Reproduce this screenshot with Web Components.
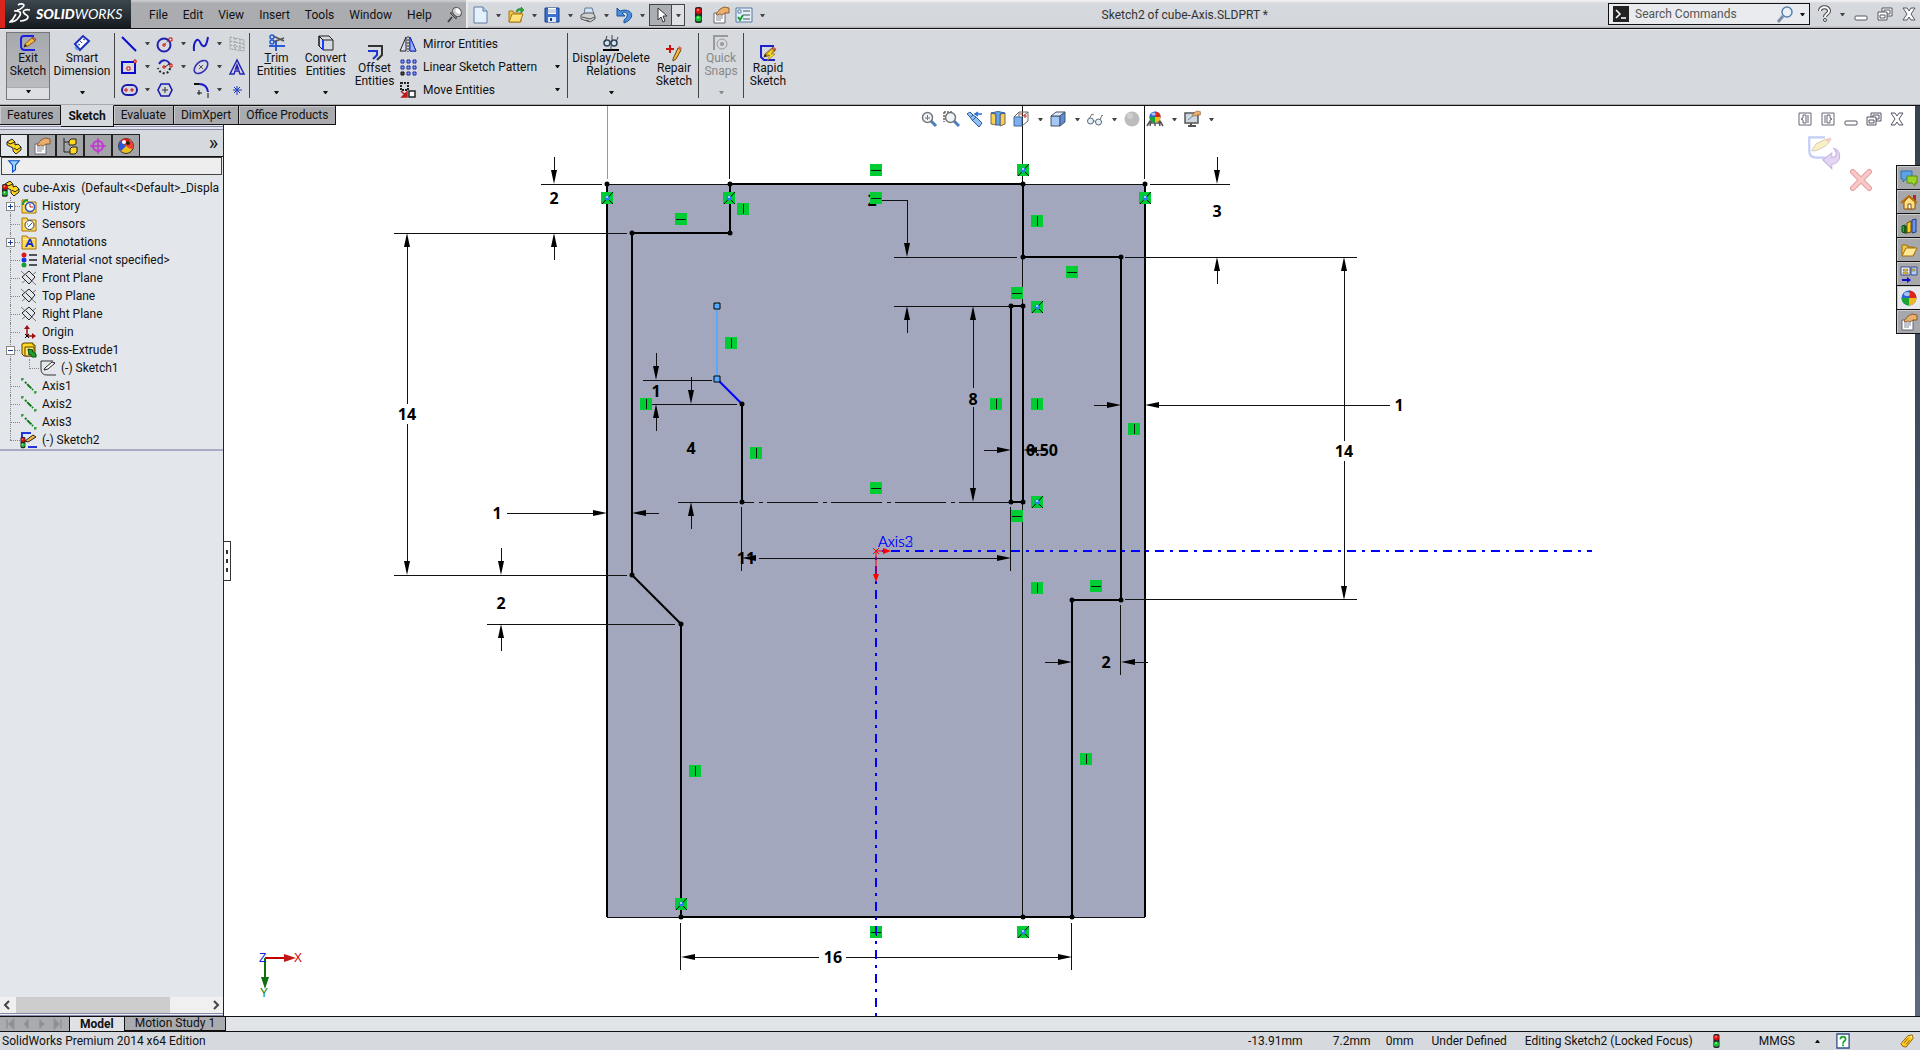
<!DOCTYPE html>
<html lang="en">
<head>
<meta charset="utf-8">
<title>Sketch2 of cube-Axis.SLDPRT *</title>
<style>
  html, body {
    height: 100%;
    margin: 0;
  }

  body {
    font-family: Roboto, "Open Sans", sans-serif;
    font-size: 12px;
    line-height: 16px;
    color: #111;
    overflow: hidden;
  }
</style>
</head>
<body>
<cad-app></cad-app>

<script>
const PENCIL = `<path d="M5 9 12 3l3 3-7 5-4 1z" fill="#f5b83c" stroke="#5b3a10" stroke-width=".7"/><path d="m12 3 1-1 3 2-1 2z" fill="#e06a5c" stroke="#703020" stroke-width=".5"/><path d="m4 12 1-3 2 2z" fill="#222"/>`;
const HAND = `<path d="M3 7 7 2l4-2 5 1v5h-4L9 8 7 7 4 8z" fill="#e8b06c" stroke="#7a4a1a" stroke-width=".8"/>`;
const LAMP = `<rect x="5" y="0" width="7" height="16" rx="2" fill="#282828"/><circle cx="8.500" cy="4" r="3" fill="#e01010"/><circle cx="8" cy="3" r="1" fill="#ff9a9a"/><circle cx="8.500" cy="11.500" r="3" fill="#12c030"/><circle cx="8" cy="10.500" r="1" fill="#a6ffb0"/>`;
const BALL = `<circle cx="8" cy="8" r="7.500" fill="#2a66d8"/><path d="M8 8V.5a7.500 7.500 0 0 1 7.500 7.500z" fill="#e02418"/><path d="M8 8h7.500A7.500 7.500 0 0 1 8 15.500z" fill="#f0b818"/><path d="M8 8v7.500A7.500 7.500 0 0 1 .5 8z" fill="#1ba436"/><ellipse cx="6" cy="4" rx="3" ry="2" fill="#fff" opacity=".6"/>`;
const FOLDER = `<path d="M1 15V2h5l1 2h8v11z" fill="#ffd95c" stroke="#a87408"/><path d="M2 5h12v1H2z" fill="#fff0b0"/>`;
const PLANE = `<path d="m0 1 15 14M15 2 1 13" stroke="#777"/><path d="m8 1 6 6-6 7-7-7z" fill="#e3e6eb" stroke="#222"/><path d="m5 5 6 6" stroke="#222"/>`;
const AXIS = `<path d="M0 1h3M1 0v3M13 14h3M14 13v3" stroke="#0a8a12"/><path d="m4 4 8 8" stroke="#0a7a12" stroke-width="2" stroke-dasharray="2 1 6 1"/>`;
const PART = `<path d="m1 4 5-3 3 3v3l3-1 3 3v3l-5 4-3-3v-3L1 7z" fill="#ffd820" stroke="#222"/><path d="m1 4 3 2 5-2M8 10l3 2 4-3" fill="none" stroke="#222"/>`;
const GLASS = `<path d="m10 10 5 5" stroke="#4b80c0" stroke-width="3"/><circle cx="6.500" cy="6.500" r="5" fill="#eef4fa" stroke="#777" stroke-width="1.500"/>`;

const ICONS = {
  newdoc: `<path d="M2 0h9l4 4v12H2z" fill="#e4f0fc" stroke="#5a7c9f"/><path d="M11 0v4h4" fill="#b9d2ec" stroke="#5a7c9f"/>`,
  open: `<path d="M1 15V4h4l1 2h7v9z" fill="#f4c64e" stroke="#a87812"/><path d="m1 15 3-8h11l-3 8z" fill="#ffe27c" stroke="#a87812"/><path d="M8 4c1-2 3-3 5-2V0l3 3-3 3V4c-2-1-3 0-4 1z" fill="#2aa835" stroke="#167a20" stroke-width=".6"/>`,
  save: `<path d="M1 1h14v14H1z" fill="#3b6fd0" stroke="#173e86"/><path d="M4 1h8v6H4z" fill="#fff"/><path d="M4 3h8M4 5h8" stroke="#9ab"/><path d="M4 10h8v5H4z" fill="#dce6f4"/><path d="M6 11h2v3H6z" fill="#173e86"/>`,
  print: `<path d="m4 7 1-6h7l2 6z" fill="#cfe2f8" stroke="#66788c"/><path d="m1 8 4-2h8l2 3v3l-5 3-9-3z" fill="#d0d0d0" stroke="#555"/><path d="m2 10 8 2 5-2M6 13l3 1" stroke="#555" fill="none"/>`,
  undo: `<path d="M1 1v8h8L6 6c5-3 8 3 2 7v3c13-5 8-16-4-12z" fill="#4c90e0" stroke="#1b4f9a"/>`,
  cursor: `<path d="M5 1v12l3-3 2 5 2-1-2-5h4z" fill="#fff" stroke="#333"/>`,
  lamp: LAMP,
  options: `<path d="M1 6h11v10H1z" fill="#fff" stroke="#667"/><path d="M3 9h7M3 11h7M3 13h5" stroke="#889"/>${HAND}`,
  checklist: `<path d="M0 1h16v14H0z" fill="#e4effa" stroke="#5878a0"/><path d="M2 3h3v3H2z" fill="#fff" stroke="#5878a0"/><path d="M7 4h7M7 8h7M7 12h7" stroke="#456"/><path d="m2 10 2 3 3-5" stroke="#1a9b30" stroke-width="2" fill="none"/>`,
  pin: `<path d="m5 10-4 5" stroke="#444" stroke-width="2"/><path d="M3 6c3 0 5-2 6-5l5 7c-3 0-5 2-5 4z" fill="#888" stroke="#444"/><ellipse cx="10" cy="5" rx="4" ry="5" fill="#ccc" stroke="#555" transform="rotate(-40 10 5)"/><ellipse cx="11" cy="4" rx="2" ry="3" fill="#fff" transform="rotate(-40 11 4)"/>`,
  exit: `<path d="M14 1H4Q1 1 1 4v7q0 4 4 4h10" fill="none" stroke="#1c22e0" stroke-width="2"/>${PENCIL}`,
  smart: `<path d="m1 9 8-8 6 5-9 9z" fill="#fff" stroke="#1a30b8" stroke-width="2"/><path d="m4 9 2 1M6 6l2 2M9 4l2 1" stroke="#1a30b8"/><path d="m1 12 3 3" stroke="#58a0f0" stroke-width="2"/>`,
  line: `<path d="m1 1 14 14" stroke="#0a0ad0" stroke-width="2"/>`,
  circle: `<circle cx="7" cy="9" r="6.500" fill="none" stroke="#2222b0" stroke-width="2"/><path d="m7 9 6-6" stroke="#222" stroke-dasharray="1 1"/><path d="M6 8h2v2H6zM12 2h3v3h-3z" fill="#fff" stroke="#c00"/>`,
  spline: `<path d="M1 15C0 5 5 1 7 6s6 8 8-5" fill="none" stroke="#1818c0" stroke-width="2"/>`,
  plane3: `<path d="m1 1 14 3v11L1 13zM6 2v12M11 3v12M1 5l14 3M1 9l14 3" fill="none" stroke="#999" stroke-dasharray="2 1"/>`,
  rect: `<path d="M1 3h13v11H1z" fill="none" stroke="#0a0ad0" stroke-width="2"/><path d="M6 8h3v3H6zM13 1h2v3h-2z" fill="#fff" stroke="#c00"/>`,
  arc: `<path d="M2 5c3-5 9-5 11 1" fill="none" stroke="#2222b0" stroke-width="2"/><path d="M13 9c-1 7-10 7-12 0" fill="none" stroke="#222" stroke-width="2" stroke-dasharray="2 2"/><path d="m8 8 4-3" stroke="#222"/><path d="M6 7h2v2H6zM13 5h2v3h-2z" fill="#fff" stroke="#c00"/>`,
  ellipse: `<ellipse cx="8" cy="8" rx="8" ry="5" fill="none" stroke="#3333b0" stroke-width="1.600" transform="rotate(-42 8 8)"/><path d="m6 6 4 4M10 6l-4 4" stroke="#555"/>`,
  textA: `<path d="M8 1 1 15h4l1-3h4l1 3h4zM8 6l1.500 4h-3z" fill="#dde" stroke="#2424b0" stroke-width="1.500" fill-rule="evenodd"/>`,
  slot: `<rect x="1" y="3" width="15" height="10" rx="5" fill="none" stroke="#1a1ab0" stroke-width="2"/><path d="M4 7h2v2H4zM10 7h2v2h-2z" fill="#fff" stroke="#c00"/>`,
  polygon: `<path d="M4 2h8l3 6-3 6H4L1 8z" fill="none" stroke="#1a1ab0" stroke-width="1.600"/><path d="M8 5v6M5 8h6" stroke="#333"/>`,
  fillet: `<path d="M1 2h5" stroke="#111" stroke-width="2"/><path d="M6 2q8 0 9 8" fill="none" stroke="#1a1ad0" stroke-width="2"/><path d="M15 11v5M6 8v5M4 11h5" stroke="#111"/>`,
  point: `<path d="M8 4v9M4 8h9M5 5l6 6M11 5l-6 6" stroke="#1a3ac0"/>`,
  trim: `<path d="M0 11h16M7 6v10" stroke="#2a5cd0" stroke-width="2"/><path d="m4 1 11 5M4 7l11-4" stroke="#555" stroke-width="1.600"/><circle cx="3" cy="2" r="2" fill="none" stroke="#2a5cd0" stroke-width="1.500"/><circle cx="3" cy="7" r="2" fill="none" stroke="#2a5cd0" stroke-width="1.500"/>`,
  convert: `<path d="M1 1h10l4 4v10H5l-4-4zM1 1l4 4h10M5 5v10" fill="none" stroke="#222"/><path d="M1 1v10l4 4V5z" fill="none" stroke="#111"/><path d="M5 5v10" stroke="#1c3cff" stroke-width="2"/>`,
  offset: `<path d="M1 1h14v9l-5 5" fill="none" stroke="#333" stroke-width="2"/><path d="M1 6h9v4l-4 4" fill="none" stroke="#2034d8" stroke-width="2"/>`,
  mirror: `<path d="M6 1v14H0zM10 1v14h6z" fill="#dde" stroke="#222"/><path d="M10 1v14h6z" fill="#9bb4ff" stroke="#1a2ac0"/><path d="M8 0v16" stroke="#222" stroke-dasharray="2 1"/>`,
  pattern: `<path d="M1 1h3v3H1zM7 1h3v3H7zM13 1h3v3h-3zM1 7h3v3H1zM7 7h3v3H7zM13 7h3v3h-3zM7 13h3v3H7zM13 13h3v3h-3z" fill="#8ca4ff" stroke="#1a2aa0"/><path d="M1 13h3v3H1z" fill="#555" stroke="#111"/>`,
  move: `<path d="M1 1h7v7H1z" fill="none" stroke="#222" stroke-width="2" stroke-dasharray="2 1"/><path d="M9 9h6v6H9z" fill="#fff" stroke="#222" stroke-width="1.500"/><path d="m1 9 6 6M7 10v5H2z" stroke="#c01818" fill="#c01818" stroke-width="1.500"/>`,
  relations: `<path d="M0 15h16" stroke="#000" stroke-width="2"/><circle cx="4" cy="8" r="3" fill="#cfe4ee" stroke="#345" stroke-width="1.500"/><circle cx="11" cy="8" r="3" fill="#cfe4ee" stroke="#345" stroke-width="1.500"/><path d="M7 8h1M2 7l2-6M9 7V0M13 7l2-5M8 11v4" stroke="#345" fill="none"/>`,
  repair: `<path d="M0 4h8M4 0v8" stroke="#d01010" stroke-width="2"/><path d="m7 14 5-11 3 2-5 9-3 2z" fill="#f5b83c" stroke="#6b4510"/><path d="m12 3 1-2 3 2-1 2z" fill="#d66"/>`,
  snaps: `<path d="M1 15V1h14" fill="none" stroke="#999" stroke-width="2"/><circle cx="9" cy="9" r="5" fill="none" stroke="#999"/><circle cx="9" cy="9" r="2" fill="#999"/>`,
  rapid: `<path d="M14 1H1v11l3 3h11" fill="none" stroke="#1c22c8" stroke-width="2"/>${PENCIL}<path d="m11 5-5 5h4l-3 6 8-7h-4l3-4z" fill="#ffe020" stroke="#8a6a00" stroke-width=".6"/>`,
  prompt: `<path d="M0 0h16v16H0z" fill="#222"/><path d="m3 4 4 4-4 4M8 12h5" stroke="#fff" stroke-width="1.500" fill="none"/>`,
  search: `<path d="M5 10 0 16" stroke="#7c8ea8" stroke-width="3"/><circle cx="9" cy="6" r="5" fill="#e9f2fb" stroke="#5c80ac" stroke-width="1.500"/>`,
  help: `<path d="M4 5c0-5 9-5 9 0 0 3-4 3-4 6" fill="none" stroke="#444" stroke-width="4"/><path d="M4 5c0-5 9-5 9 0 0 3-4 3-4 6" fill="none" stroke="#fff" stroke-width="2"/><circle cx="9" cy="14" r="1.500" fill="#fff" stroke="#444"/>`,
  min: `<rect x="2" y="10" width="12" height="4" rx="1" fill="#fff" stroke="#556"/>`,
  restore: `<path d="M5 2h10v8H5z" fill="#fff" stroke="#556"/><path d="M7 4h6v4H7z" fill="none" stroke="#556"/><path d="M1 6h9v8H1z" fill="#fff" stroke="#556"/><path d="M3 9h5v3H3z" fill="none" stroke="#556"/>`,
  close: `<path d="M2 2h4l2 3 2-3h4l-4 6 4 6h-4l-2-3-2 3H2l4-6z" fill="#fff" stroke="#556"/>`,
  paneL: `<path d="M2 2h12v12H2z" fill="#fff" stroke="#667"/><path d="M9 4v8H6V9L4 8l2-1V4zM11 4v8" fill="none" stroke="#667"/>`,
  paneR: `<path d="M2 2h12v12H2z" fill="#fff" stroke="#667"/><path d="M7 4v8h3V9l2-1-2-1V4zM5 4v8" fill="none" stroke="#667"/>`,
  part: PART,
  partlamp: `<g transform="translate(2 0)">${PART}</g><g transform="translate(-4 4) scale(.8)">${LAMP}</g>`,
  config: `<path d="M2 0v14h6M2 4h6" fill="none" stroke="#222"/><g fill="#ffd820" stroke="#222"><path d="m7 3 2-2h5v5l-2 1H7zM8 11l2-2h5v5l-2 2H8z"/></g>`,
  dimx: `<circle cx="8" cy="8" r="5" fill="none" stroke="#c038d0" stroke-width="2"/><path d="M8 0v16M0 8h16" stroke="#c038d0" stroke-width="1.500"/>`,
  beach: `<circle cx="8" cy="8" r="7.500" fill="#e8c020" stroke="#333"/><path d="M8 8 2 3a7.500 7.500 0 0 1 10-1z" fill="#e02020"/><path d="M8 8 2 3a7.500 7.500 0 0 0 1 10z" fill="#2b55d8"/><path d="M8 8c2-3 4-4 4-6 3 2 4 6 3 9-3 0-5-1-7-3z" fill="#f04030"/><circle cx="10" cy="5" r="2" fill="#222"/><circle cx="6" cy="4" r="2" fill="#fff"/>`,
  filter: `<path d="M1 1h14l-5 6v6l-4 3V7z" fill="#9cd0ff" stroke="#0a50c8" stroke-width="1.500"/>`,
  history: `${FOLDER}<circle cx="9" cy="9" r="4.500" fill="#fff" stroke="#2454c0" stroke-width="1.500"/><path d="M9 6v3h3" stroke="#c01818" fill="none"/><path d="M2 7c0-3 2-5 5-5" fill="none" stroke="#1a9b30" stroke-width="2"/>`,
  sensor: `${FOLDER}<circle cx="8.500" cy="9" r="4.500" fill="#fff" stroke="#345"/><path d="m7 11 4-4M6 8h1" stroke="#2454c0"/>`,
  notes: `${FOLDER}<path d="m4 13 4-8h2l3 8h-2l-1-2H7l-1 2zM8 9h2l-1-2z" fill="#1633c8" fill-rule="evenodd"/>`,
  material: `<circle cx="3" cy="3" r="2.500" fill="#e01818"/><circle cx="3" cy="8" r="2.500" fill="#1c38e0"/><circle cx="3" cy="13" r="2.500" fill="#18a030"/><path d="M8 3h8M8 8h8M8 13h8" stroke="#222" stroke-width="1.500"/>`,
  plane: PLANE,
  origin: `<path d="M6 3v9h7" fill="none" stroke="#a01010" stroke-width="1.500"/><path d="m3 5 3-4 3 4zM11 9l4 3-4 3z" fill="#a01010"/><path d="m4 10 4 4M8 10l-4 4" stroke="#000"/>`,
  extrude: `<path d="M1 12V2l2-1h9v2h2v11H3z" fill="#ffd820" stroke="#5c4200"/><path d="M4 5h9v9H4z" fill="#ffe878" stroke="#5c4200"/><path d="m7 7 5 1-1 1 4 3v3h-4l-2-3-1 1z" fill="#1ea030" stroke="#0a4a12"/>`,
  sketch: `<path d="M13 1H1v8q0 6 6 6h9" fill="none" stroke="#333"/><path d="m5 8 7-6 3 1-7 6-4 1z" fill="#fff" stroke="#222"/>`,
  axis: AXIS,
  sketch2: `<path d="M10 1H1v6M7 15h9" fill="none" stroke="#2036d8" stroke-width="2"/><path d="m4 9 8-6 3 2-8 5z" fill="#f5b83c" stroke="#222"/><g transform="translate(-4 5) scale(.7)">${LAMP}</g>`,
  zoomfit: `${GLASS}<path d="M4 7h5M6.500 4v5" stroke="#777"/>`,
  zoomarea: `${GLASS}<path d="M0 1h9M0 1v10" stroke="#666" stroke-dasharray="2 1" stroke-width="1.500"/>`,
  prevview: `<path d="m0 3 3-2 3 3 3 2 6 6-3 4-7-7-2-3z" fill="#8fc0f4" stroke="#305c98"/><path d="m3 7 3-3M6 9l3-3" stroke="#305c98"/><path d="M9 3h6M11 1 8 3l3 2" stroke="#2a6cd8" fill="none" stroke-width="1.500"/>`,
  section: `<path d="m1 2 5 1v11l-5-1zM10 3l5-1v11l-5 2z" fill="#f8d050" stroke="#765"/><path d="M1 2q7-3 14 0l-5 1v11H6V3z" fill="#6aa4ee" stroke="#3a629c"/>`,
  orient: `<path d="M1 6h8v9H1z" fill="#7eb0f0" stroke="#3a66a0"/><path d="m1 6 5-5h9v9l-6 5M9 6l6-5M6 1v5" fill="none" stroke="#666"/><path d="M11 5h3M12 3v4M7 3h3" stroke="#c33"/>`,
  cube: `<path d="M1 5h9v10H1z" fill="#a5c8f8" stroke="#456"/><path d="m1 5 5-4h9l-5 4z" fill="#dceafc" stroke="#456"/><path d="m10 5 5-4v10l-5 4z" fill="#5f8ed8" stroke="#456"/>`,
  glasses: `<circle cx="3.500" cy="10" r="3" fill="#e6f2f8" stroke="#567"/><circle cx="11.500" cy="11" r="3" fill="#e6f2f8" stroke="#567"/><path d="M6 10h2M2 8l3-5 2 1M13 9l2-5 1 1" fill="none" stroke="#777"/>`,
  sphere: `<circle cx="8" cy="8" r="7.500" fill="#bcbcbc"/><circle cx="6" cy="5" r="3" fill="#cfcfcf"/>`,
  scene: `<path d="m0 15 3-5h10l3 5M1 12h14M4 10l-1 5M8 10v5M12 10l1 5" fill="none" stroke="#555" stroke-width="1.500"/><g transform="translate(2) scale(.75)">${BALL}</g>`,
  screen: `<path d="M1 2h13v10H1z" fill="#cdd8e2" stroke="#555" stroke-width="1.500"/><path d="M4 15h8M7 12v3" stroke="#555" stroke-width="2"/><path d="m4 9 7-6" stroke="#7788a0"/><g transform="translate(6) scale(.65)">${HAND}</g>`,
  forum: `<path d="M0 1h11v8H5l-3 3V9H0z" fill="#5ba4e8" stroke="#2f6fb4"/><path d="M6 6h10v7h-2v3l-3-3H6z" fill="#9bd428" stroke="#5a8a10"/>`,
  home: `<path d="M12 1h3v6h-3z" fill="#b02828"/><path d="M3 8v7h11V8L8 3z" fill="#ffe080" stroke="#86500c"/><path d="m0 9 8-7 8 7" fill="none" stroke="#b8700c" stroke-width="2"/><path d="M7 10h3v5H7z" fill="#fff" stroke="#86500c"/>`,
  library: `<path d="m1 8 3-1v8l-3-1zM4 8l2 1v6H4z" fill="#28a838" stroke="#0b4a14"/><path d="m6 5 4-2v11l-4 1z" fill="#ffcc28" stroke="#6a4a00"/><path d="m11 2 4-1v13l-4 1z" fill="#6c96e8" stroke="#203c80"/>`,
  folder: `<path d="M1 13V3h5l1 2h6v8z" fill="#f4c64e" stroke="#a06c08"/><path d="m1 14 4-8h11l-4 8z" fill="#ffe896" stroke="#a06c08"/>`,
  palette: `<path d="M0 1h9v8H0z" fill="#fff" stroke="#3a4c90"/><path d="M10 1h6v8h-6z" fill="#b9cdf0" stroke="#3a4c90"/><path d="M2 3h5v2H2zM2 6h5v2H2zM11 3h3v2h-3z" fill="#f0c830" stroke="#555" stroke-width=".5"/><path d="M1 13h5v-2l4 3-4 3v-2H1z" fill="#1010c8"/>`,
  ball: BALL,
  quest: `<path d="M1 0h14v16H1z" fill="#fff" stroke="#33508c" stroke-width="1.500"/><path d="M5 6c0-4 6-4 6 0 0 2-3 2-3 5M8 12v2" fill="none" stroke="#16a028" stroke-width="2"/>`,
  tag: `<path d="m1 11 8-9 5-1 1 4-8 10-4-1z" fill="#ffc828" stroke="#8a5a00"/><path d="m5 10 4-5M7 12l4-5" stroke="#8a5a00"/><circle cx="13" cy="3" r="1" fill="#fff"/>`,
  first: `<path d="M4 2v12M13 2 7 8l6 6z" fill="#8e9094" stroke="#8e9094" stroke-width="2"/>`,
  prev: `<path d="m11 2-6 6 6 6z" fill="#8e9094" stroke="#8e9094"/>`,
  next: `<path d="m5 2 6 6-6 6z" fill="#8e9094" stroke="#8e9094"/>`,
  last: `<path d="M12 2v12M3 2l6 6-6 6z" fill="#8e9094" stroke="#8e9094" stroke-width="2"/>`,
  accept: `<path d="M8 1H1v6q0 3 3 3h4" fill="none" stroke="#c3cdf8" stroke-width="1"/><path d="m2 7 2-3 4-2 2 1-2 2-4 2z" fill="#fbf0c4" stroke="#ccc4b4" stroke-width=".4"/><path d="m8 2 2-1 1 1-1 1z" fill="#f6cfcb"/><path d="M12 6c4 1 3 7-1 7v2l-4-4 4-3v2c3 0 2-3 1-4z" fill="#e3d6f2" stroke="#c9b4e4" stroke-width=".5"/>`,
  reject: `<path d="m2 2 12 12M14 2 2 14" stroke="#e0a0a0" stroke-width="4" stroke-linecap="round"/><path d="m2 2 12 12M14 2 2 14" stroke="#fac8c8" stroke-width="2.600" stroke-linecap="round"/>`
};

class CadElement extends HTMLElement {
  constructor() {
    super();
    const template = document.createElement("template");
    template.innerHTML = this.markup();
    this._shadowRoot = this.attachShadow({ mode: "open" });
    this._shadowRoot.appendChild(template.content.cloneNode(true));
  }
}

class CadIcon extends HTMLElement {
  connectedCallback() {
    if (this.shadowRoot) return;
    this.attachShadow({ mode: "open" }).innerHTML = `
<style>
  :host { display: inline-block; flex: none; width: var(--icon-size, 16px); height: var(--icon-size, 16px); white-space: normal; }
  svg { display: block; width: 100%; height: 100%; overflow: visible; }
</style>
<svg viewBox="0 0 16 16" fill="none" aria-hidden="true">${ICONS[this.getAttribute("name")]}</svg>`;
  }
}
customElements.define("cad-icon", CadIcon);

class CadCaret extends CadElement {
  markup() {
    return `
<style>
  :host { display: inline-block; flex: none; width: 5px; height: 3px; white-space: normal; }
  svg { display: block; }
</style>
<svg width="5" height="3" viewBox="0 0 5 3"><path d="M0 0h5L3 3H2z" fill="currentColor"/></svg>`;
  }
}
customElements.define("cad-caret", CadCaret);

// Small flat button: an icon, and with [menu] a drop-down arrow after it
class IconButton extends HTMLElement {
  connectedCallback() {
    if (this.shadowRoot) return;
    this.attachShadow({ mode: "open" }).innerHTML = `
<style>
  :host { display: inline-flex; flex: none; }
  :host([pressed]) { margin: 0 -2px 0 -3px; }
  button {
    display: flex;
    align-items: center;
    gap: var(--caret-gap, 8px);
    padding: var(--button-padding, 0);
    border: 0;
    background: none;
    color: #444;
  }
  :host([pressed]) button {
    gap: 7px;
    height: 22px;
    padding: 0 3px;
    border: 1px solid #444;
    background: linear-gradient(90deg, #abaeb3 21px, #444 21px, #444 22px, #dfe1e5 22px);
  }
</style>
<button aria-label="${this.getAttribute("label") || this.getAttribute("icon")}"><cad-icon name="${this.getAttribute("icon")}"></cad-icon>${this.hasAttribute("menu") ? "<cad-caret></cad-caret>" : ""}</button>`;
  }
}
customElements.define("icon-button", IconButton);

class TitleBar extends CadElement {
  markup() {
    return `
<style>
  :host {
    display: flex;
    height: 28px;
    border-bottom: 1px solid #111;
    background: linear-gradient(#f0f0f2 1px, #d6d9de 3px, #d3d6db 26px, #a4a6aa 28px);
  }
  .logo {
    display: flex;
    align-items: center;
    gap: 5px;
    width: 122px;
    border-left: 5px solid #d9261c;
    padding-left: 4px;
    background: linear-gradient(#3d474e, #151a1f);
    color: #fff;
    font: italic 14px/28px Lato, sans-serif;
  }
  .logo b { font-weight: 900; }
  .menus {
    display: flex;
    align-items: center;
    gap: 15px;
    padding: 2px 3px 0 18px;
    background: linear-gradient(#c9cacd 1px, #abadb1 3px, #a9abaf 26px);
    border-right: 2px solid #e8e9eb;
  }
  .menus button { border: 0; padding: 0; background: none; font: inherit; color: #111; }
  .quick { display: flex; align-items: center; gap: 7px; padding: 2px 4px 0; margin-right: auto; }
  .title { align-self: center; padding: 2px 340px 0 0; color: #333; }
  .search {
    display: flex;
    align-items: center;
    gap: 6px;
    width: 192px;
    height: 20px;
    margin: 3px 6px 0 0;
    padding: 0 4px;
    border: 1px solid #111;
    background: #e9ebee;
  }
  input { flex: 1; min-width: 0; border: 0; padding: 0; background: none; font: inherit; }
  input::placeholder { color: #555; opacity: 1; }
  .window { display: flex; align-items: center; gap: 8px; padding-right: 3px; }
</style>
<div class="logo">
  <svg width="22" height="22" viewBox="0 0 22 22" fill="none" stroke="#fff" stroke-width="1.700"><path d="M9 2c3-2 8-1 5 2-2 2-4 3-6 3M5 8c6-1 8 2 5 6-2 3-6 5-9 5l3-3 3-5M21 7c-5-1-8 1-6 3 1 2 4 2 4 4s-3 4-8 4"/></svg>
  <span><b>SOLID</b>WORKS</span>
</div>
<nav class="menus">
  <button>File</button><button>Edit</button><button>View</button><button>Insert</button><button>Tools</button><button>Window</button><button>Help</button>
  <cad-icon name="pin"></cad-icon>
</nav>
<div class="quick">
  <icon-button icon="newdoc" label="New" menu></icon-button>
  <icon-button icon="open" label="Open" menu></icon-button>
  <icon-button icon="save" label="Save" menu></icon-button>
  <icon-button icon="print" label="Print" menu></icon-button>
  <icon-button icon="undo" label="Undo" menu></icon-button>
  <icon-button icon="cursor" label="Select" menu pressed></icon-button>
  <icon-button icon="lamp" label="Rebuild"></icon-button>
  <icon-button icon="options" label="File properties"></icon-button>
  <icon-button icon="checklist" label="Options" menu></icon-button>
</div>
<div class="title">Sketch2 of cube-Axis.SLDPRT *</div>
<label class="search">
  <cad-icon name="prompt"></cad-icon>
  <input type="text" placeholder="Search Commands" aria-label="Search Commands">
  <cad-icon name="search"></cad-icon><cad-caret></cad-caret>
</label>
<div class="window">
  <icon-button icon="help" label="Help" menu></icon-button>
  <icon-button icon="min" label="Minimize"></icon-button>
  <icon-button icon="restore" label="Restore"></icon-button>
  <icon-button icon="close" label="Close"></icon-button>
</div>`;
  }
}
customElements.define("title-bar", TitleBar);

// Big ribbon button: icon over a two-line label
class ToolButton extends HTMLElement {
  connectedCallback() {
    if (this.shadowRoot) return;
    this.attachShadow({ mode: "open" }).innerHTML = `
<style>
  :host { display: flex; flex: none; width: 49px; height: 68px; justify-content: center; }
  button {
    display: flex;
    flex-direction: column;
    align-items: center;
    justify-content: center;
    width: 100%;
    padding: 0;
    border: 0;
    background: none;
    font: inherit;
    line-height: 13px;
    color: #111;
    white-space: nowrap;
  }
  span { margin-top: 1px; }
  :host([menu]) button { justify-content: flex-start; padding-top: 3px; }
  :host([menu]) cad-caret { margin: auto 0 6px; }
  :host([pressed]) button {
    border: 1px solid #777;
    padding-top: 2px;
    background: linear-gradient(#a5a8ac, #b9bbbf 54px, #777 54px, #dcdee2 55px);
  }
  :host([pressed]) { margin-right: 2px; }
  :host([slim]) { width: 40px; }
  :host([narrow]) { width: 44px; }
  :host([wide]) { width: 60px; }
  :host([wider]) { width: 82px; }
  :host([disabled]) button { color: #888; }
</style>
<button ${this.hasAttribute("disabled") ? "disabled" : ""}><cad-icon name="${this.getAttribute("icon")}"></cad-icon><span><slot></slot></span>${this.hasAttribute("menu") ? "<cad-caret></cad-caret>" : ""}</button>`;
  }
}
customElements.define("tool-button", ToolButton);

class RibbonBar extends CadElement {
  markup() {
    return `
<style>
  :host {
    position: relative;
    z-index: 2;
    display: flex;
    align-items: flex-start;
    height: 73px;
    padding: 3px 6px 0;
    border-bottom: 1px solid #111;
    background: #d6d9de;
    box-shadow: inset 0 1px #eceaf2, inset 0 -1px #a9abaf;
  }
  .sep { width: 1px; height: 65px; margin: 1px 2px 0; background: #444; }
  .grid {
    display: grid;
    grid-template-columns: 36px 36px 36px 16px;
    grid-auto-rows: 23px;
    align-items: center;
    padding: 0 2px 0 4px;
  }
  .list { display: grid; grid-auto-rows: 23px; width: 160px; padding: 0 5px 0 1px; }
  .list button {
    display: flex;
    align-items: center;
    gap: 7px;
    padding: 0;
    border: 0;
    background: none;
    font: inherit;
    color: #111;
    white-space: nowrap;
  }
  .list cad-caret { margin-left: auto; }
  .tabs { position: absolute; left: 0; top: 100%; display: flex; align-items: flex-start; }
  .tabs button {
    height: 20px;
    padding: 0 7px;
    border: 1px solid #111;
    border-left-width: 0;
    background: #a9abaf;
    font: inherit;
    line-height: 18px;
    color: #111;
    box-shadow: inset 1px 1px #c8cacc;
  }
  .tabs [aria-selected=true] { height: 22px; border-top-color: #d6d9de; background: #d6d9de; font-weight: bold; box-shadow: none; }
</style>
<tool-button icon="exit" menu pressed narrow>Exit<br>Sketch</tool-button>
<tool-button icon="smart" menu wide>Smart<br>Dimension</tool-button>
<div class="sep"></div>
<div class="grid">
  <icon-button icon="line" menu></icon-button><icon-button icon="circle" menu></icon-button><icon-button icon="spline" menu></icon-button><icon-button icon="plane3"></icon-button>
  <icon-button icon="rect" menu></icon-button><icon-button icon="arc" menu></icon-button><icon-button icon="ellipse" menu></icon-button><icon-button icon="textA"></icon-button>
  <icon-button icon="slot" menu></icon-button><icon-button icon="polygon"></icon-button><icon-button icon="fillet" menu></icon-button><icon-button icon="point"></icon-button>
</div>
<div class="sep"></div>
<tool-button icon="trim" menu><u>T</u>rim<br>Entities</tool-button>
<tool-button icon="convert" menu>Convert<br>Entities</tool-button>
<tool-button icon="offset">Offset<br>Entities</tool-button>
<div class="list">
  <button><cad-icon name="mirror"></cad-icon>Mirror Entities</button>
  <button><cad-icon name="pattern"></cad-icon>Linear Sketch Pattern<cad-caret></cad-caret></button>
  <button><cad-icon name="move"></cad-icon>Move Entities<cad-caret></cad-caret></button>
</div>
<div class="sep"></div>
<tool-button icon="relations" menu wider>Display/Delete<br>Relations</tool-button>
<tool-button icon="repair" narrow>Repair<br>Sketch</tool-button>
<div class="sep"></div>
<tool-button icon="snaps" menu disabled slim>Quick<br>Snaps</tool-button>
<div class="sep"></div>
<tool-button icon="rapid" narrow>Rapid<br>Sketch</tool-button>
<div class="tabs" role="tablist">
  <button role="tab">Features</button><button role="tab" aria-selected="true">Sketch</button><button role="tab">Evaluate</button><button role="tab">DimXpert</button><button role="tab">Office Products</button>
</div>`;
  }
}
customElements.define("ribbon-bar", RibbonBar);

class TreeItem extends HTMLElement {
  connectedCallback() {
    if (this.shadowRoot) return;
    const toggle = this.getAttribute("toggle");
    this.attachShadow({ mode: "open" }).innerHTML = `
<style>
  :host { display: flex; align-items: center; gap: 5px; height: 18px; white-space: pre; }
  .gutter { position: relative; flex: none; align-self: stretch; width: 16px; }
  .gutter::before { content: ""; position: absolute; left: 10px; top: 0; bottom: 0; border-left: 1px dotted #888; }
  .gutter::after { content: ""; position: absolute; left: 10px; right: -4px; top: 9px; border-top: 1px dotted #888; }
  :host([last]) .gutter::before { bottom: 9px; }
  :host([root]) .gutter { display: none; }
  :host([root]) { padding-left: 2px; }
  :host([child]) .gutter { width: 35px; }
  :host([child]) .gutter::after { left: 29px; top: 0; height: 9px; border-left: 1px dotted #888; border-top: 0; border-bottom: 1px dotted #888; }
  i {
    position: absolute;
    z-index: 1;
    left: 6px;
    top: 5px;
    width: 7px;
    height: 7px;
    border: 1px solid #888;
    background: linear-gradient(#1c3c9c, #1c3c9c) center / 5px 1px no-repeat, #fff;
  }
  i.plus { background: linear-gradient(#1c3c9c, #1c3c9c) center / 5px 1px no-repeat, linear-gradient(#1c3c9c, #1c3c9c) center / 1px 5px no-repeat, #fff; }
</style>
<div class="gutter">${toggle ? `<i class="${toggle}"></i>` : ""}</div><cad-icon name="${this.getAttribute("icon")}"></cad-icon><slot></slot>`;
  }
}
customElements.define("tree-item", TreeItem);

class FeaturePanel extends CadElement {
  markup() {
    return `
<style>
  :host {
    display: flex;
    flex-direction: column;
    width: 223px;
    padding-top: 20px;
    border-right: 1px solid #222;
    background: #e3e6eb;
  }
  .strip { height: 2px; border: solid #8888ac; border-width: 1px 0; background: #e3e6eb; }
  .tabs { display: flex; align-items: flex-end; height: 26px; border-bottom: 1px solid #111; background: #d6d9de; }
  .tabs button { width: 28px; height: 22px; padding: 0; border: 1px solid #222; border-bottom: 0; background: #a3a5a9; line-height: 0; }
  .tabs .on { background: #e3e6eb; }
  .tabs span { margin: 0 5px 3px auto; font-size: 20px; line-height: 20px; }
  .filter { display: flex; align-items: center; height: 16px; margin: 0 1px; padding: 0 6px; border: 1px solid #444; background: #eee; --icon-size: 12px; }
  input { flex: 1; min-width: 0; height: 14px; padding: 0 4px; border: 0; background: none; font: inherit; }
  .tree { padding: 4px 0 0; border-bottom: 2px solid #aaaac8; overflow: hidden; }
  .scroll { display: flex; align-items: center; height: 16px; margin-top: auto; border-bottom: 3px double #8888ac; background: #f0f0f0; }
  .scroll i { width: 154px; height: 16px; background: #cdcdcd; margin-right: auto; }
  .scroll svg { width: 16px; height: 16px; fill: none; stroke: #444; stroke-width: 2; }
</style>
<div class="strip"></div>
<div class="tabs">
  <button class="on" aria-label="Feature tree"><cad-icon name="part"></cad-icon></button><button aria-label="Properties"><cad-icon name="options"></cad-icon></button><button aria-label="Configurations"><cad-icon name="config"></cad-icon></button><button aria-label="DimXpert"><cad-icon name="dimx"></cad-icon></button><button aria-label="Display"><cad-icon name="beach"></cad-icon></button>
  <span>»</span>
</div>
<label class="filter"><cad-icon name="filter"></cad-icon><input type="text" aria-label="Filter"></label>
<div class="tree">
  <tree-item root icon="partlamp">cube-Axis  (Default&lt;&lt;Default&gt;_Displa</tree-item>
  <tree-item icon="history" toggle="plus">History</tree-item>
  <tree-item icon="sensor">Sensors</tree-item>
  <tree-item icon="notes" toggle="plus">Annotations</tree-item>
  <tree-item icon="material">Material &lt;not specified&gt;</tree-item>
  <tree-item icon="plane">Front Plane</tree-item>
  <tree-item icon="plane">Top Plane</tree-item>
  <tree-item icon="plane">Right Plane</tree-item>
  <tree-item icon="origin">Origin</tree-item>
  <tree-item icon="extrude" toggle="minus">Boss-Extrude1</tree-item>
  <tree-item child icon="sketch">(-) Sketch1</tree-item>
  <tree-item icon="axis">Axis1</tree-item>
  <tree-item icon="axis">Axis2</tree-item>
  <tree-item icon="axis">Axis3</tree-item>
  <tree-item last icon="sketch2">(-) Sketch2</tree-item>
</div>
<div class="scroll">
  <svg viewBox="0 0 16 16"><path d="M9 4 5 8l4 4"/></svg><i></i><svg viewBox="0 0 16 16"><path d="m7 4 4 4-4 4"/></svg>
</div>`;
  }
}
customElements.define("feature-panel", FeaturePanel);

// Drawing coordinates are window pixels; the group is shifted to the canvas corner
const line = (x1, y1, x2, y2, cls = "thin") => `<path class="${cls}" d="M${x1} ${y1}L${x2} ${y2}"/>`;

// Arrow with its tip at x,y pointing up/down/left/right, with a tail of the given total length
const arrow = (x, y, dir, tail = 27) => {
  const angle = { right: 0, down: 90, left: 180, up: 270 }[dir];
  return `<g transform="translate(${x} ${y}) rotate(${angle})"><path class="thin" d="M${-tail} 0H-12"/><path d="M0 0-14-3V3z"/></g>`;
};

const label = (x, y, text) => `<text class="dim" x="${x}" y="${y + 6}">${text}</text>`;
const dot = ([x, y]) => `<circle cx="${x}" cy="${y}" r="2.500"/>`;

const relation = ([kind, x, y]) => {
  const marks = {
    h: `<path class="thin" d="M-5 0H5"/>`,
    v: `<path class="thin" d="M0-5V5"/>`,
    x: `<path class="thin" d="M-5 0H5M0-4V4"/>`,
    c: `<path d="M-5 6 6-6M0 0 6 6" stroke="#000"/><circle r="2.500" fill="#2a7cf0"/><circle cy="-1" r="1" fill="#cfe6ff"/>`
  };
  return `<g transform="translate(${x} ${y})"><path d="M-6-6H6V6H-6z" fill="#00cc33"/>${marks[kind]}</g>`;
};

const DIMENSIONS = [
  // left side: 2, 14, 1, 2
  line(541, 184, 602, 184), line(394, 233, 627, 233),
  arrow(554, 184, "down"), label(554, 198, "2"), arrow(554, 233, "up"),
  line(394, 575, 627, 575), arrow(407, 233, "up", 171), label(407, 414, "14"), arrow(407, 575, "down", 151),
  label(497, 513, "1"), arrow(607, 513, "right", 100), arrow(632, 513, "left"),
  line(487, 624, 675, 624), arrow(501, 575, "down"), label(501, 603, "2"), arrow(501, 624, "up"),
  // inner step: 1, 4, 11
  line(643, 380, 712, 380), arrow(656, 380, "down"), label(656, 391, "1"), line(652, 404, 737, 404), arrow(656, 404, "up"),
  arrow(691, 404, "down"), label(691, 448, "4"), line(678, 502, 738, 502), arrow(691, 502, "up"),
  line(741, 507, 741, 571), line(1010, 507, 1010, 571), arrow(1011, 558, "right", 252), arrow(742, 558, "left", 14), label(746, 558, "11"),
  // slot: 2, 8, 0.50
  label(872, 200, "2"), line(882, 200, 907, 200), arrow(907, 257, "down", 57), line(894, 257, 1017, 257),
  line(894, 306, 1011, 306), arrow(907, 306, "up"),
  arrow(973, 306, "up", 82), label(973, 399, "8"), arrow(973, 502, "down", 95), line(959, 502, 1011, 502),
  arrow(1011, 450, "right"), arrow(1023, 450, "left", 24), label(1042, 450, "0.50"),
  // right side: 3, 14, 1, 2
  line(1150, 184, 1230, 184), arrow(1217, 184, "down"), label(1217, 211, "3"), arrow(1217, 257, "up"), line(1125, 257, 1357, 257),
  arrow(1344, 257, "up", 184), label(1344, 451, "14"), arrow(1344, 600, "down", 139), line(1125, 599, 1357, 599),
  arrow(1121, 405, "right"), arrow(1145, 405, "left", 245), label(1399, 405, "1"),
  arrow(1072, 662, "right"), label(1106, 662, "2"), line(1120, 605, 1120, 675), arrow(1121, 662, "left"),
  // bottom: 16
  line(680, 923, 680, 970), line(1071, 923, 1071, 970), arrow(681, 957, "left", 138), label(833, 957, "16"), arrow(1072, 957, "right", 226)
];

const POINTS = [
  [607, 184], [730, 184], [1023, 184], [1145, 184], [632, 233], [730, 233], [632, 575], [681, 624], [681, 917],
  [1023, 917], [1072, 917], [1072, 600], [1121, 600], [1121, 257], [1023, 257], [1011, 306], [1023, 306],
  [1011, 502], [1023, 502], [742, 404], [742, 502]
];

const RELATIONS = [
  ["h", 876, 170], ["h", 876, 198], ["h", 681, 219], ["h", 876, 488], ["h", 1072, 272], ["h", 1017, 293], ["h", 1017, 516],
  ["h", 1096, 586], ["v", 743, 209], ["v", 731, 343], ["v", 646, 404], ["v", 756, 453], ["v", 1037, 221], ["v", 996, 404],
  ["v", 1037, 404], ["v", 1134, 429], ["v", 1037, 588], ["v", 695, 771], ["v", 1086, 759], ["x", 876, 932],
  ["c", 607, 198], ["c", 729, 198], ["c", 1023, 170], ["c", 1145, 198], ["c", 1037, 307], ["c", 1037, 502], ["c", 681, 904], ["c", 1023, 932]
];

class SketchCanvas extends CadElement {
  markup() {
    return `
<style>
  :host { position: relative; display: block; flex: 1; min-width: 0; background: #fff; }
  .drawing { position: absolute; inset: 0; width: 100%; height: 100%; }
  .thin { fill: none; stroke: #111; stroke-width: 1; shape-rendering: crispEdges; }
  .pale { stroke: #999; }
  .bold { fill: none; stroke: #000; stroke-width: 2; }
  .axis { fill: none; stroke: #00f; stroke-width: 2; stroke-dasharray: 9 6 3 6; stroke-dashoffset: 9; }
  .dim { font: 700 16px "Open Sans", sans-serif; text-anchor: middle; }
  .name { font: 300 15px Lato, sans-serif; fill: #00f; }
  .triad { font: 12px "Liberation Sans", sans-serif; }
  .view { position: absolute; left: 0; right: 4px; top: 5px; display: flex; justify-content: center; gap: 7px; --caret-gap: 9px; }
  .window { position: absolute; right: 10px; top: 5px; display: flex; gap: 7px; }
  .confirm { position: absolute; right: 43px; top: 29px; display: flex; align-items: flex-end; gap: 7px; }
  .confirm :first-child { --icon-size: 36px; }
  .confirm :last-child { --icon-size: 22px; margin-bottom: -20px; }
  .handle {
    position: absolute;
    left: -1px;
    top: 435px;
    display: grid;
    place-content: center;
    gap: 5px;
    width: 8px;
    height: 40px;
    padding: 0;
    border: 1px solid #333;
    background: #fff;
  }
  .handle i { width: 2px; height: 4px; background: #333; }
</style>
<svg class="drawing">
  <g transform="translate(-224 -106)">
    <path d="M607 184h538v733H607z" fill="#a2a7bd"/>
    ${line(607, 184, 1145, 184)}${line(607, 917, 1145, 917)}
    ${line(607, 184, 607, 917, "bold")}${line(1145, 184, 1145, 917, "bold")}
    ${line(607, 106, 607, 179, "thin pale")}${line(729, 106, 729, 179)}${line(1022, 106, 1022, 917)}${line(1144, 106, 1144, 179)}
    <path class="bold" d="M730 184V233H632V575L681 624V917H1072V600H1121V257H1023V184z"/>
    <path class="bold" d="M1011 306h12v196h-12z"/>
    ${line(742, 404, 742, 502, "bold")}
    <path class="thin" d="M742 502H959" stroke-dasharray="51 5 4 4" stroke-dashoffset="39"/>
    ${DIMENSIONS.join("")}
    <path d="m717 379 25 25" stroke="#00f" stroke-width="2"/>
    <path d="M717 306v73" stroke="#5af" stroke-width="2"/>
    ${POINTS.map(dot).join("")}
    ${RELATIONS.map(relation).join("")}
    <path class="axis" d="M876 551H1592"/>
    <path class="axis" d="M876 551V1016"/>
    <path d="M714 303h6v6h-6zM714 376h6v6h-6z" fill="#5af" stroke="#000"/>
    <path d="M876 551h8M876 551v24M873 548l6 6M879 548l-6 6" stroke="#f00"/>
    <path d="m883 548 8 3-8 3zM873 574l3 8 3-8z" fill="#f00"/>
    <text class="name" x="878" y="547">Axis2</text><text class="name" x="878" y="547">Axis3</text>
    <g class="triad">
      <path d="M265 958h22" stroke="#c00000" stroke-width="2"/><path d="m284 954 12 4-12 4z" fill="#c01818"/>
      <path d="M265 958v22" stroke="#107010" stroke-width="2"/><path d="m261 977 4 12 4-12z" fill="#107010"/>
      <text x="294" y="962" fill="#d00000">X</text><text x="260" y="997" fill="#108010">Y</text><text x="259" y="962" fill="#2020e0">Z</text>
    </g>
  </g>
</svg>
<div class="view">
  <icon-button icon="zoomfit"></icon-button><icon-button icon="zoomarea"></icon-button><icon-button icon="prevview"></icon-button><icon-button icon="section"></icon-button><icon-button icon="orient" menu></icon-button><icon-button icon="cube" menu></icon-button><icon-button icon="glasses" menu></icon-button><icon-button icon="sphere"></icon-button><icon-button icon="scene" menu></icon-button><icon-button icon="screen" menu></icon-button>
</div>
<div class="window">
  <icon-button icon="paneL"></icon-button><icon-button icon="paneR"></icon-button><icon-button icon="min"></icon-button><icon-button icon="restore"></icon-button><icon-button icon="close"></icon-button>
</div>
<div class="confirm"><icon-button icon="accept"></icon-button><icon-button icon="reject"></icon-button></div>
<button class="handle" aria-label="Collapse panel"><i></i><i></i><i></i></button>`;
  }
}
customElements.define("sketch-canvas", SketchCanvas);

class TaskPane extends CadElement {
  markup() {
    return `
<style>
  :host { position: relative; display: block; width: 5px; background: linear-gradient(#36424f, #3c4a5c 30%, #5c6b7d); }
  .tabs { position: absolute; right: 0; top: 59px; width: 24px; border-top: 1px solid #111; }
  button {
    display: grid;
    place-content: center;
    width: 24px;
    height: 24px;
    padding: 0;
    border: solid #111;
    border-width: 0 0 1px 1px;
    background: #a6a8ac;
    box-shadow: inset 1px 1px #ccc;
  }
  .on { background: #e6e8ec; }
</style>
<div class="tabs">
  ${["forum", "home", "library", "folder", "palette", "ball", "options"].map(name => `<button aria-label="${name}"${name === "ball" ? ' class="on"' : ""}><cad-icon name="${name}"></cad-icon></button>`).join("")}
</div>`;
  }
}
customElements.define("task-pane", TaskPane);

class SheetTabs extends CadElement {
  markup() {
    return `
<style>
  :host { display: flex; height: 14px; border: solid #111; border-width: 1px 0; background: #e1e4e9; }
  .nav { display: flex; gap: 2px; padding: 0 4px 0 3px; background: #a9abaf; --icon-size: 12px; --button-padding: 1px; border-right: 1px solid #111; }
  .tab { height: 14px; padding: 0 10px; border: solid #111; border-width: 0 1px 1px 0; background: #a9abaf; font: inherit; line-height: 13px; color: #111; }
  .on { background: #dfe1e6; border-bottom: 0; font-weight: bold; }
</style>
<div class="nav"><icon-button icon="first"></icon-button><icon-button icon="prev"></icon-button><icon-button icon="next"></icon-button><icon-button icon="last"></icon-button></div>
<button class="tab on">Model</button><button class="tab">Motion Study 1</button>`;
  }
}
customElements.define("sheet-tabs", SheetTabs);

class StatusBar extends CadElement {
  markup() {
    return `
<style>
  :host { display: flex; align-items: center; height: 18px; padding: 0 6px 0 2px; background: #d6d9de; white-space: nowrap; }
  .app { margin-right: auto; }
  .coords { display: flex; }
  .coords span { text-align: right; width: 68px; }
  .coords span:last-child { width: 43px; }
  .state { margin-left: 18px; }
  cad-icon { margin-left: 16px; --icon-size: 14px; }
  .units { margin: 0 20px 0 36px; }
  .tag { margin-left: 50px; }
  cad-caret { transform: rotate(180deg); }
</style>
<span class="app">SolidWorks Premium 2014 x64 Edition</span>
<div class="coords"><span>-13.91mm</span><span>7.2mm</span><span>0mm</span></div>
<span class="state">Under Defined</span>
<span class="state">Editing Sketch2 (Locked Focus)</span>
<cad-icon name="lamp"></cad-icon>
<span class="units">MMGS</span><cad-caret></cad-caret>
<cad-icon name="quest"></cad-icon>
<cad-icon class="tag" name="tag"></cad-icon>`;
  }
}
customElements.define("status-bar", StatusBar);

class CadApp extends CadElement {
  markup() {
    return `
<style>
  :host { display: flex; flex-direction: column; height: 100vh; }
  main { display: flex; flex: 1; min-height: 0; }
</style>
<title-bar></title-bar>
<ribbon-bar></ribbon-bar>
<main><feature-panel></feature-panel><sketch-canvas></sketch-canvas><task-pane></task-pane></main>
<sheet-tabs></sheet-tabs>
<status-bar></status-bar>`;
  }
}
customElements.define("cad-app", CadApp);
</script>
</body>
</html>
